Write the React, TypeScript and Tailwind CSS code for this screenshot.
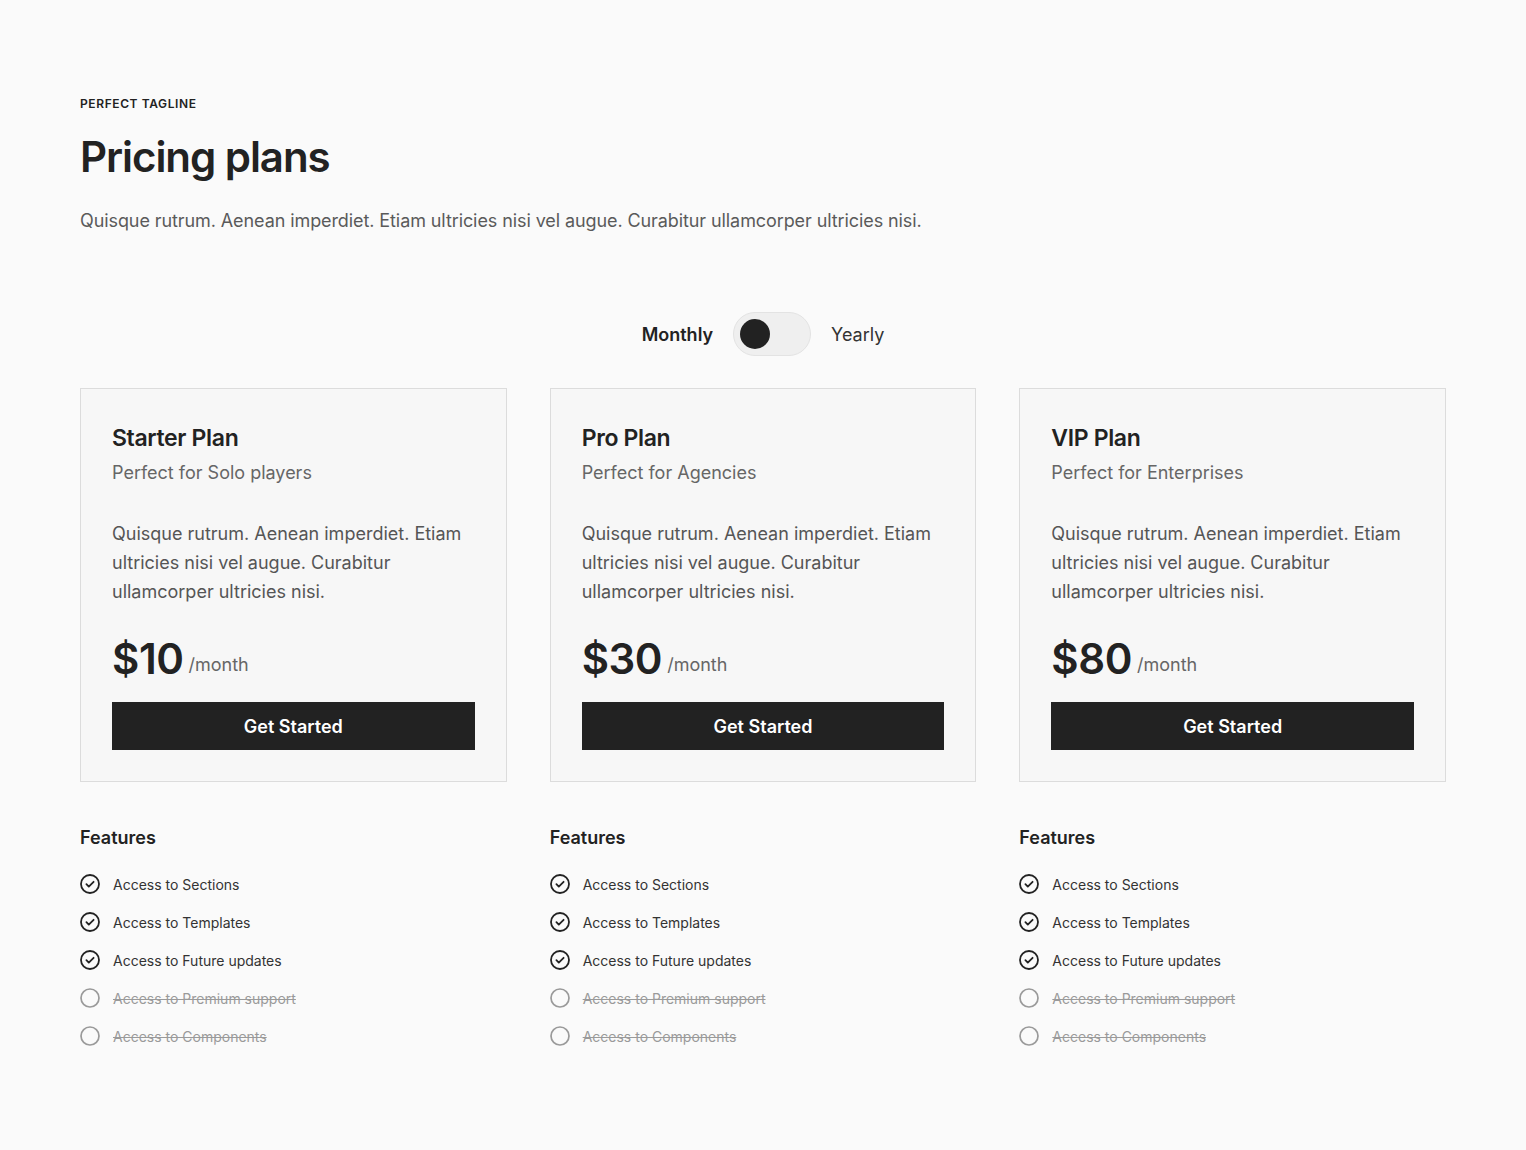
import React from "react";

const plans = [
  { name: "Starter Plan", sub: "Perfect for Solo players", price: "$10" },
  { name: "Pro Plan", sub: "Perfect for Agencies", price: "$30" },
  { name: "VIP Plan", sub: "Perfect for Enterprises", price: "$80" },
];

const features = [
  { label: "Access to Sections", on: true },
  { label: "Access to Templates", on: true },
  { label: "Access to Future updates", on: true },
  { label: "Access to Premium support", on: false },
  { label: "Access to Components", on: false },
];

function CheckCircle() {
  return (
    <svg width="20" height="20" viewBox="0 0 20 20" fill="none" stroke="#222222" strokeWidth="1.8" strokeLinecap="round" strokeLinejoin="round">
      <circle cx="10" cy="10" r="9" />
      <path d="M6.4 10.2 8.8 12.6 13.6 7.8" />
    </svg>
  );
}

function EmptyCircle() {
  return (
    <svg width="20" height="20" viewBox="0 0 20 20" fill="none" stroke="#9a9a9a" strokeWidth="1.7">
      <circle cx="10" cy="10" r="9" />
    </svg>
  );
}

export default function App() {
  return (
    <div
      className="min-h-[1150px] w-full bg-[#fafafa] text-[#222222]"
      style={{ fontFamily: "Inter, 'Noto Sans', sans-serif" }}
    >
      <div className="px-[80px] pt-[96px] pb-[80px]">
        <p className="text-[12px] leading-[16px] font-semibold tracking-[0.05em] uppercase text-[#222]">
          Perfect tagline
        </p>
        <h1 className="mt-[19px] text-[42px] leading-[52px] font-semibold tracking-[-0.025em] text-[#222]">
          Pricing plans
        </h1>
        <p className="mt-[24px] text-[18px] leading-[28px] tracking-[-0.005em] text-[#5a5a5a]">
          Quisque rutrum. Aenean imperdiet. Etiam ultricies nisi vel augue. Curabitur ullamcorper ultricies nisi.
        </p>

        <div className="mt-[77px] flex items-center justify-center gap-[20px]">
          <span className="text-[18px] font-semibold text-[#222]">Monthly</span>
          <div className="flex h-[44px] w-[78px] items-center rounded-full border border-[#e3e3e3] bg-[#efefef] px-[6px]">
            <div className="h-[30px] w-[30px] rounded-full bg-[#222]" />
          </div>
          <span className="text-[18px] text-[#333]">Yearly</span>
        </div>

        <div className="mt-[32px] grid grid-cols-3 gap-x-[43px]">
          {plans.map((p) => (
            <div key={p.name} className="flex flex-col">
              <div className="border border-[#dcdcdc] bg-[#f7f7f7] px-[31px] pt-[31px] pb-[31px]">
                <h2 className="text-[23px] leading-[36px] font-semibold tracking-[-0.015em] text-[#222]">{p.name}</h2>
                <p className="mt-[2px] text-[18px] leading-[29px] text-[#666]">{p.sub}</p>
                <p className="mt-[32px] text-[18px] leading-[29px] text-[#555]">
                  Quisque rutrum. Aenean imperdiet. Etiam ultricies nisi vel augue. Curabitur ullamcorper ultricies nisi.
                </p>
                <div className="mt-[29px] flex items-center gap-[5px]">
                  <span className="text-[42px] leading-[48px] font-semibold tracking-[-0.01em] text-[#222]">{p.price}</span>
                  <span className="mt-[10px] text-[18px] text-[#666]">/month</span>
                </div>
                <button className="mt-[19px] h-[48px] w-full bg-[#222] text-[18px] font-semibold text-white">
                  Get Started
                </button>
              </div>
              <h3 className="mt-[42px] text-[18px] leading-[27px] font-semibold text-[#222]">Features</h3>
              <ul className="mt-[22px] flex flex-col gap-[16px]">
                {features.map((f) => (
                  <li key={f.label} className="flex h-[22px] items-center gap-[13px]">
                    {f.on ? <CheckCircle /> : <EmptyCircle />}
                    <span
                      className={
                        f.on
                          ? "text-[14px] text-[#333]"
                          : "text-[14px] text-[#9a9a9a] line-through"
                      }
                    >
                      {f.label}
                    </span>
                  </li>
                ))}
              </ul>
            </div>
          ))}
        </div>
      </div>
    </div>
  );
}
